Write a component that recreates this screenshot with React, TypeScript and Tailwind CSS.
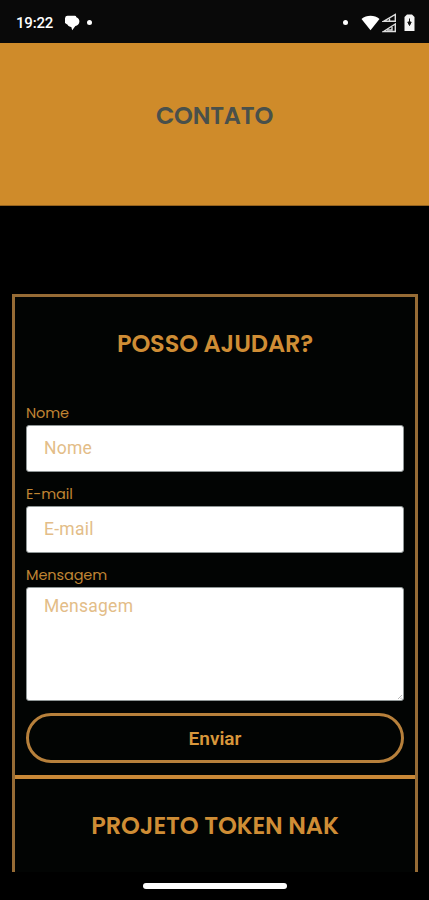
import React from "react";

const heading =
  "font-['Poppins','Inter',sans-serif] text-[24px] font-semibold tracking-[-0.1px] whitespace-nowrap text-[#cf8d35]";
const field =
  "block w-full rounded-[3px] border border-[#8f9696] bg-white px-[17px] font-['Roboto',sans-serif] text-[17.5px] tracking-[0.25px] text-[#cc8b30] placeholder:text-[#e3bd88] placeholder:opacity-100 outline-none";

function StatusBar() {
  return (
    <header className="flex h-[43px] items-center bg-[#090909] pl-4 pr-[14px] pt-[2px] text-white">
      <span className="w-[38px] font-['Roboto',sans-serif] text-[15px] font-medium leading-5 tracking-[-0.2px]">
        19:22
      </span>
      <svg className="ml-[10px]" width="16" height="16" viewBox="0 0 16 16" fill="#fff">
        <path d="M3.500 .8h7.300q1.200 0 1.600 1.400c2 .7 3.100 2.300 3 4.300-.1 2.500-1.700 4-4 4.400L8.200 15.300 7.300 12C5.500 11.900 4.300 11.200 3.600 9.800L1 8V3.200Q1.300.8 3.500.8z" />
      </svg>
      <span className="ml-[7px] size-[5px] rounded-full bg-white" />
      <span className="ml-auto size-[5px] rounded-full bg-white" />
      <svg className="ml-[13px]" width="19" height="16" viewBox="0 0 19 16" fill="#fff">
        <path d="M.5 4C5.500-.2 13.500-.2 18.500 4L9.500 15.300z" />
      </svg>
      <svg className="ml-[2px]" width="16" height="20" viewBox="0 0 16 20" fill="none" stroke="#dedede" strokeWidth="1.400">
        <path d="M1.500 8.300 13.300 1.500v6.800z" />
        <path d="M1.500 18.500 13.300 11v7.500z" />
        <path d="M7.500 8.300V5.500M5 17h5v-3" />
      </svg>
      <svg className="ml-[6px]" width="11" height="18" viewBox="0 0 11 18">
        <path d="M3 .5h5L10.500 3v14H.5V3z" fill="#f4f4f4" />
        <path d="M5.500 4.500V8M3.800 8h3.400L5.500 11.500z" fill="#111" stroke="#111" />
      </svg>
    </header>
  );
}

function Label({ id, children }: { id: string; children: React.ReactNode }) {
  return (
    <label
      htmlFor={id}
      className="flex h-[22px] items-center pt-[2px] font-['Poppins','Inter',sans-serif] text-[14.5px] tracking-[-0.1px] text-[#c08533]"
    >
      {children}
    </label>
  );
}

export default function App() {
  return (
    <div className="flex h-[900px] w-[429px] flex-col overflow-hidden bg-black">
      <StatusBar />
      <section className="flex h-[163px] items-center justify-center border-b border-[#94621f] bg-[#cf8b2a] pb-[17px]">
        <h1 className="font-['Poppins','Inter',sans-serif] text-[24px] font-semibold tracking-[-0.2px] text-[#49504b]">
          CONTATO
        </h1>
      </section>

      <main className="mx-3 mt-[88px] flex h-[578px] w-[406px] flex-col overflow-hidden border-x-[3px] border-t-[3px] border-[#966b35] bg-[#020403]">
        <div className="flex h-[93px] shrink-0 items-center justify-center">
          <h2 className={heading}>POSSO AJUDAR?</h2>
        </div>
        <form className="mt-3 flex shrink-0 flex-col px-[11px]" onSubmit={(e) => e.preventDefault()}>
          <Label id="nome">Nome</Label>
          <input id="nome" placeholder="Nome" className={`${field} mt-px h-[47px] pb-[2px]`} />
          <div className="h-[11px]" />
          <Label id="email">E-mail</Label>
          <input id="email" type="email" placeholder="E-mail" className={`${field} mt-px h-[47px] pb-[2px]`} />
          <div className="h-[11px]" />
          <Label id="mensagem">Mensagem</Label>
          <div className="relative mt-px">
            <textarea
              id="mensagem"
              placeholder="Mensagem"
              className={`${field} h-[114px] resize-none pt-[5px] leading-[26px]`}
            />
            <svg className="absolute right-[2px] bottom-[2px]" width="4" height="4" viewBox="0 0 4 4" stroke="#999" strokeWidth=".7">
              <path d="M0 4 4 0M2.500 4 4 2.500" />
            </svg>
          </div>
          <button className="mt-3 h-[50px] rounded-full border-[3px] border-[#b7803b] pt-[2px] font-['Roboto',sans-serif] text-[19px] font-semibold text-[#d8973b]">
            Enviar
          </button>
        </form>
        <div className="mt-3 h-1 shrink-0 bg-[#c98837]" />
        <div className="flex h-[94px] shrink-0 items-center justify-center">
          <h2 className={heading}>PROJETO TOKEN NAK</h2>
        </div>
      </main>

      <div className="flex h-7 items-center justify-center">
        <span className="h-[6px] w-[144px] rounded-full bg-white" />
      </div>
    </div>
  );
}
